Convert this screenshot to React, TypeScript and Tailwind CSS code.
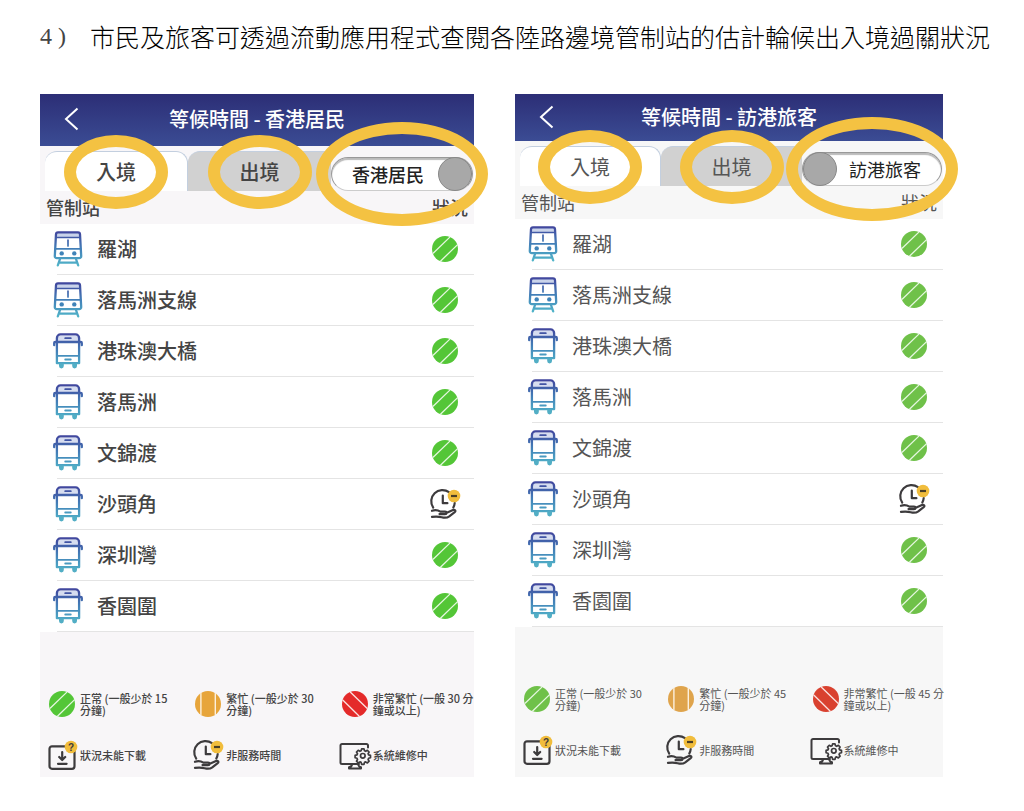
import { useState } from "react";
import clsx from "clsx";

type Status = "normal" | "busy" | "veryBusy" | "closed" | "unavailable" | "maintenance";

const stations: { name: string; kind: "train" | "bus"; status: Status }[] = [
  { name: "羅湖", kind: "train", status: "normal" },
  { name: "落馬洲支線", kind: "train", status: "normal" },
  { name: "港珠澳大橋", kind: "bus", status: "normal" },
  { name: "落馬洲", kind: "bus", status: "normal" },
  { name: "文錦渡", kind: "bus", status: "normal" },
  { name: "沙頭角", kind: "bus", status: "closed" },
  { name: "深圳灣", kind: "bus", status: "normal" },
  { name: "香園圍", kind: "bus", status: "normal" },
];

function TrainIcon() {
  return (
    <svg viewBox="0 0 30 36" className="h-9 w-[30px] shrink-0" fill="none" aria-hidden="true">
      <path d="M4 2h22v4H4Z" fill="#c9d3ea" />
      <g stroke="url(#vehicle)" strokeWidth="2.3" strokeLinecap="round" strokeLinejoin="round">
        <path d="M5 1.4h20a2 2 0 0 1 2 1.9l1.2 21.800a2 2 0 0 1-2 2.100H3.800a2 2 0 0 1-2-2.100L3 3.300a2 2 0 0 1 2-1.900Z" />
        <path d="M3 6.500h24M2.400 17.800h25.200" strokeWidth="1.700" />
        <path d="M15 9v6" strokeWidth="1.700" />
        <path d="M7 28l-2.200 6.400M23 28l2.200 6.400M6 31.600h18" />
      </g>
      <circle cx="8.700" cy="22.400" r="2.200" fill="#3f83b8" />
      <circle cx="21.300" cy="22.400" r="2.200" fill="#3f83b8" />
    </svg>
  );
}

function BusIcon() {
  return (
    <svg viewBox="0 0 30 36" className="h-9 w-[30px] shrink-0" fill="none" aria-hidden="true">
      <path d="M5 3h20v5H5Z" fill="#d6ddf0" />
      <g stroke="url(#vehicle)" strokeWidth="2.300" strokeLinecap="round" strokeLinejoin="round">
        <path d="M7.500 1.400h15a3.600 3.600 0 0 1 3.600 3.600v25.200H3.900V5a3.600 3.600 0 0 1 3.600-3.600Z" />
        <path d="M1.200 12.200V9.900Q1.200 9 2.200 9h25.600q1 0 1 .9v2.300" />
        <path d="M3.900 22.800h22.200M12.200 5.200h5.600M12.200 26.500h5.600" strokeWidth="1.800" />
      </g>
      <path d="M6 30.500h4.800v2.600a2.400 2.400 0 0 1-4.800 0ZM19.200 30.500H24v2.600a2.400 2.400 0 0 1-4.800 0Z" fill="#52aec5" />
    </svg>
  );
}

function StatusIcon({ status, muted }: { status: Status; muted: boolean }) {
  return (
    <svg
      viewBox="0 0 30 30"
      className="size-[30px] shrink-0 overflow-visible"
      fill="none"
      strokeLinecap="round"
      strokeLinejoin="round"
      aria-hidden="true"
    >
      {status === "normal" && (
        <>
          <circle cx="15" cy="15" r="13" fill={muted ? "#6fc149" : "#54c637"} />
          <path d="M3.400 19 19.600 3.400M10.700 27 27.600 10.600" stroke="#e6f7e0" strokeWidth="1.300" />
        </>
      )}
      {status === "busy" && (
        <>
          <circle cx="15" cy="15" r="13" fill={muted ? "#dfa44c" : "#e7a53b"} />
          <path d="M7.900 4.500v21M22.300 4.500v21" stroke="#fdf0dc" strokeWidth="1.400" />
        </>
      )}
      {status === "veryBusy" && (
        <>
          <circle cx="15" cy="15" r="13" fill={muted ? "#d9412f" : "#e42a2a"} />
          <path d="M10.500 3.300 27 19.300M3 11.300 19 27" stroke="#fbe3e1" strokeWidth="1.300" />
        </>
      )}
      {status === "closed" && (
        <>
          <g stroke="#3d3b3d" strokeWidth="2.200">
            <path d="M3.200 18.600A11.200 11.200 0 0 1 19 3.200M24.700 14a11 11 0 0 1-1.400 4.500" />
            <path d="M12.800 6.600v7.600h4.600" />
            <path d="M2 21.800c3.200-1.200 6-.7 8.400.9H15c2 0 2 2.400 0 2.400H9.500M16.800 23.800l6.200-2.700c2-.8 3.200.8 1.700 2l-5.400 4.200c-2.300 1.700-4.800 1.700-7.600.9-3.300-.9-6-.8-9.700-.4" />
          </g>
          <circle cx="24" cy="7" r="6.300" fill="#f1bd3c" />
          <path d="M21 7h6" stroke="#4a3f26" strokeWidth="2.200" strokeLinecap="butt" />
        </>
      )}
      {status === "unavailable" && (
        <>
          <rect x="2.500" y="6.300" width="25" height="22.500" rx="2.500" stroke="#3d3b3d" strokeWidth="2.200" />
          <path d="M15.200 12v7.500M12.200 17l3 3 3-3M11 23.800h8.600" stroke="#3d3b3d" strokeWidth="2.200" />
          <circle cx="24" cy="7" r="6.300" fill="#f1bd3c" />
          <text x="24" y="10.500" textAnchor="middle" fill="#3d3b3d" fontSize="10" fontWeight="700" fontFamily="Liberation Sans, sans-serif">
            ?
          </text>
        </>
      )}
      {status === "maintenance" && (
        <g stroke="#3d3b3d" strokeWidth="2">
          <path d="M28 7.500v-2A1.500 1.500 0 0 0 26.500 4H2A1.500 1.500 0 0 0 .5 5.500v17A1.500 1.500 0 0 0 2 24h17" />
          <path d="M12 24c0 2-1 3-3 3.300v1.200h12v-1.200c-1.500-.3-2.300-1-2.600-2" />
          <circle cx="22.800" cy="15.800" r="2.300" strokeWidth="1.700" />
          <path
            strokeWidth="1.700"
            d="M21.600 8.900h2.400l.5 1.900 1.200.5 1.700-1 1.700 1.700-1 1.700.5 1.200 1.900.5v2.400l-1.900.5-.5 1.200 1 1.700-1.700 1.700-1.700-1-1.200.5-.5 1.900h-2.400l-.5-1.900-1.200-.5-1.700 1-1.700-1.700 1-1.700-.5-1.200-1.900-.5v-2.400l1.900-.5.5-1.200-1-1.700 1.700-1.700 1.700 1 1.200-.5Z"
          />
        </g>
      )}
    </svg>
  );
}

function Ring({ wide = false }: { wide?: boolean }) {
  return (
    <span
      className={clsx(
        "pointer-events-none absolute top-1/2 left-1/2 z-10 -translate-x-1/2 -translate-y-1/2 rounded-[50%] border-12 border-[#f4c242]",
        wide ? "h-[104px] w-[172px]" : "h-[74px] w-[104px]",
      )}
    />
  );
}

type PhoneProps = {
  audience: string;
  resident: boolean;
  minutes: number;
};

function Phone({ audience, resident, minutes }: PhoneProps) {
  const [checked, setChecked] = useState(resident);
  const [tab, setTab] = useState("入境");

  const legend: { status: Status; lines: string[] }[] = [
    { status: "normal", lines: [`正常 (一般少於 ${resident ? 15 : 30}`, "分鐘)"] },
    { status: "busy", lines: [`繁忙 (一般少於 ${minutes}`, "分鐘)"] },
    { status: "veryBusy", lines: [`非常繁忙 (一般 ${minutes} 分`, "鐘或以上)"] },
    { status: "unavailable", lines: ["狀況未能下載"] },
    { status: "closed", lines: ["非服務時間"] },
    { status: "maintenance", lines: ["系統維修中"] },
  ];

  return (
    <section
      className={clsx(
        "flex min-w-0 flex-col",
        resident ? "bg-[#f8f6f8] font-medium text-[#444]" : "bg-[#f7f7f7] font-normal text-[#555]",
      )}
    >
      <header
        className={clsx(
          "grid grid-cols-[1fr_auto_1fr] items-center bg-linear-to-b from-[#2c2e76] to-[#3b4c94] px-6 pb-0.5 text-white",
          resident ? "h-[52px]" : "h-[47px]",
        )}
      >
        <button type="button" aria-label="返回" className="justify-self-start">
          <svg viewBox="0 0 15 24" className="h-6 w-[15px]" fill="none" stroke="currentColor" strokeWidth="2">
            <path d="M13.500 1.500 2 12l11.500 10.500" />
          </svg>
        </button>
        <h2 className="text-[20px] leading-7 font-medium">等候時間 - {audience}</h2>
      </header>

      <div className="grid grid-cols-3 items-end pt-[5px] pl-[5px]">
        {["入境", "出境"].map((label) => (
          <button
            key={label}
            type="button"
            onClick={() => setTab(label)}
            className={clsx(
              "relative h-10 rounded-t-xl border-t border-[#c3cfdf] text-[20px]",
              tab === label ? "border-r bg-white" : "rounded-tr-none bg-[#d1d1d1]",
            )}
          >
            {label}
            <Ring />
          </button>
        ))}
        <label
          className={clsx(
            "relative mr-px flex h-[34px] items-center rounded-full border border-[#999] border-b-[#ccc] bg-white text-[18px] text-[#222] shadow-[inset_0_2px_1px_#bbb]",
            !checked && "flex-row-reverse",
          )}
        >
          <span className={clsx("flex-1 text-center", checked ? "pl-1.5" : "pr-2")}>{audience}</span>
          <input
            type="checkbox"
            role="switch"
            checked={checked}
            onChange={(e) => setChecked(e.target.checked)}
            className="size-[34px] appearance-none rounded-full border border-[#888] bg-[#a8a8a8]"
          />
          <Ring wide />
        </label>
      </div>

      <table className="w-full border-separate border-spacing-0">
        <thead>
          <tr className={clsx("h-[33px] text-[18px]", resident ? "*:font-medium" : "*:font-normal")}>
            <th className="p-0 pl-1.5 text-left">管制站</th>
            <th className="p-0 pr-1.5 text-right">狀況</th>
          </tr>
        </thead>
        <tbody>
          {stations.map((station) => (
            <tr key={station.name} className="bg-white">
              <td className="p-0 pl-[17px]">
                <div className="flex h-[51px] items-center border-b border-[#e4e4e4]">
                  <span className="-ml-1 flex items-center gap-[14px] text-[20px]">
                    {station.kind === "train" ? <TrainIcon /> : <BusIcon />}
                    {station.name}
                  </span>
                </div>
              </td>
              <td className="p-0">
                <div className="flex h-[51px] items-center justify-end border-b border-[#e4e4e4] pr-[14px]">
                  <StatusIcon status={station.status} muted={!resident} />
                </div>
              </td>
            </tr>
          ))}
        </tbody>
      </table>

      <ul className="grid grid-cols-[146fr_146fr_134fr] gap-y-[21px] pt-[57px] pb-[7px] pl-[7px] text-[11px] leading-3">
        {legend.map((item) => (
          <li key={item.status} className="flex min-w-0 items-center gap-[3px]">
            <StatusIcon status={item.status} muted={!resident} />
            <span className="whitespace-nowrap">
              {item.lines.map((line) => (
                <span key={line} className="block">
                  {line}
                </span>
              ))}
            </span>
          </li>
        ))}
      </ul>
    </section>
  );
}

export default function App() {
  return (
    <main lang="zh-Hant" className="min-h-screen bg-white pb-8 font-['Noto_Sans_CJK_TC',sans-serif]">
      <svg className="absolute size-0" aria-hidden="true">
        <defs>
          <linearGradient id="vehicle" gradientUnits="userSpaceOnUse" x1="0" y1="0" x2="0" y2="36">
            <stop offset="0" stopColor="#40439c" />
            <stop offset="0.5" stopColor="#4380b8" />
            <stop offset="1" stopColor="#52b8ca" />
          </linearGradient>
        </defs>
      </svg>

      <h1 className="flex pt-[18px] pr-6 pl-10 text-[25px] leading-9 font-light text-black">
        <span className="w-[50px] shrink-0 font-['Liberation_Serif',serif] text-[24px] text-[#444]">4 )</span>
        <span>市民及旅客可透過流動應用程式查閱各陸路邊境管制站的估計輪候出入境過關狀況</span>
      </h1>

      <div className="mt-10 grid grid-cols-[434fr_428fr] gap-[41px] pr-[81px] pl-10">
        <Phone audience="香港居民" resident minutes={30} />
        <Phone audience="訪港旅客" resident={false} minutes={45} />
      </div>
    </main>
  );
}
